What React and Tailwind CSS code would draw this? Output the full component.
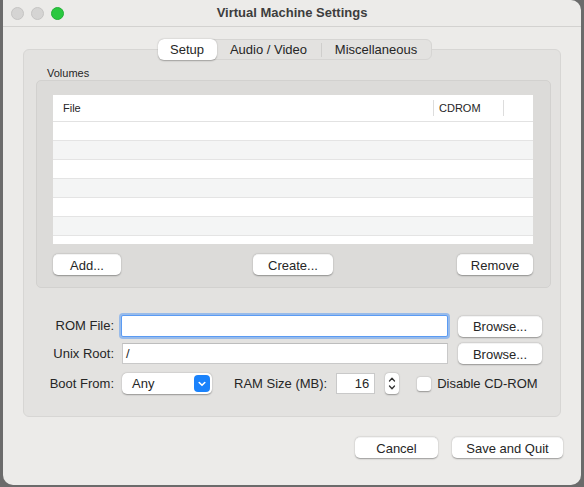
import React from "react";

const Btn = ({ children, className = "" }) => (
  <button
    className={`h-[21px] bg-white rounded-[5px] text-[13px] text-[#262626] shadow-[0_0.5px_1.5px_rgba(0,0,0,0.35)] border-t border-t-[#f3f3f3] leading-none ${className}`}
  >
    {children}
  </button>
);

const Dot = ({ color }) => (
  <span className={`w-[13px] h-[13px] rounded-full ${color}`} />
);

const App = () => {
  const rows = [0, 1, 2, 3, 4, 5, 6];

  return (
    <div
      className="w-[584px] h-[487px] bg-[#6b6b6b] pl-[3px] pr-[3px] pb-[2px] flex"
      style={{ fontFamily: '"Liberation Sans", Arial, sans-serif' }}
    >
      <div className="flex-1 bg-[#ecebe9] rounded-[10px] rounded-tl-none flex flex-col overflow-hidden">
        {/* title bar */}
        <div className="h-[27px] border-b border-[#d3d2d0] flex items-center relative shrink-0">
          <div className="flex gap-[7px] pl-[8px]">
            <Dot color="bg-[#d5d4d3] border border-[#c5c4c3]" />
            <Dot color="bg-[#d5d4d3] border border-[#c5c4c3]" />
            <Dot color="bg-[#2ac840] border border-[#22b036]" />
          </div>
          <div className="absolute inset-0 flex items-center justify-center text-[13px] font-bold text-[#3d3d3d]">
            Virtual Machine Settings
          </div>
        </div>

        {/* tab group */}
        <div className="pt-[12px] px-[20px] flex flex-col">
          <div className="flex justify-center relative z-10 -mb-[11px] pl-[5px]">
            <div className="flex items-center h-[21px] bg-[#e3e2e0] rounded-[6px] border border-[#d6d5d3] text-[13px] text-[#262626]">
              <div className="h-[21px] -my-px -ml-px w-[59px] bg-white rounded-[6px] shadow-[0_0.5px_1.5px_rgba(0,0,0,0.3)] flex items-center justify-center">
                Setup
              </div>
              <div className="w-[104px] text-center">Audio / Video</div>
              <div className="w-px h-[14px] bg-[#cfcecc]" />
              <div className="w-[109px] text-center">Miscellaneous</div>
            </div>
          </div>
          <div className="h-[368px] bg-[#e3e2e0] border border-[#d7d6d4] rounded-[6px] flex flex-col pl-[12px] pr-[9px] pt-[16px]">
            <div className="text-[11px] text-[#262626] pl-[11px] h-[14px] leading-[14px]">Volumes</div>
            <div className="h-[208px] bg-[#dcdbd9] border border-[#d2d1cf] rounded-[5px] pl-[16px] pr-[17px] pt-[14px] flex flex-col">
              <div className="h-[149px] bg-white flex flex-col overflow-hidden">
                <div className="h-[27px] flex items-center text-[11px] text-[#262626] border-b border-[#e2e2e2] shrink-0">
                  <div className="flex-1 pl-[10px]">File</div>
                  <div className="w-px h-[16px] bg-[#dddddd]" />
                  <div className="w-[69px] pl-[5px]">CDROM</div>
                  <div className="w-px h-[16px] bg-[#dddddd]" />
                  <div className="w-[29px]" />
                </div>
                {rows.map((r) => (
                  <div
                    key={r}
                    className={`h-[19px] shrink-0 border-b border-[#e4e4e4] ${r % 2 === 1 ? "bg-[#f4f5f5]" : "bg-white"}`}
                  />
                ))}
              </div>
              <div className="flex items-center mt-[10px]">
                <div className="flex-1 flex">
                  <Btn className="w-[68px]">Add...</Btn>
                </div>
                <Btn className="w-[80px]">Create...</Btn>
                <div className="flex-1 flex justify-end">
                  <Btn className="w-[76px]">Remove</Btn>
                </div>
              </div>
            </div>

            {/* form */}
            <div className="mt-[27px] flex flex-col text-[13px] text-[#262626]">
              <div className="flex items-center h-[22px]">
                <div className="w-[85px] text-right pr-[7px]">ROM File:</div>
                <div className="w-[327px] h-[22px] bg-white border border-[#5b9bf3] shadow-[0_0_0_2px_rgba(91,155,243,0.55)] rounded-[2px]" />
                <Btn className="w-[84px] ml-[10px]">Browse...</Btn>
              </div>
              <div className="flex items-center h-[21px] mt-[6px]">
                <div className="w-[85px] text-right pr-[7px]">Unix Root:</div>
                <div className="w-[326px] h-[21px] bg-white border border-[#c9c9c9] border-t-[#bdbdbd] ml-[1px] flex items-center pl-[3px]">
                  /
                </div>
                <Btn className="w-[84px] ml-[10px]">Browse...</Btn>
              </div>
              <div className="flex items-center h-[21px] mt-[9px]">
                <div className="w-[85px] text-right pr-[7px]">Boot From:</div>
                <div className="ml-[1px] w-[90px] h-[21px] bg-white rounded-[5px] shadow-[0_0.5px_1.5px_rgba(0,0,0,0.35)] flex items-center justify-between pl-[10px] pr-[2px]">
                  <span>Any</span>
                  <span className="w-[16px] h-[17px] rounded-[4px] bg-[#1a82fb] flex items-center justify-center">
                    <svg width="8" height="6" viewBox="0 0 8 6">
                      <path d="M1.2 1.5 L4 4.3 L6.8 1.5" stroke="white" strokeWidth="1.6" fill="none" strokeLinecap="round" strokeLinejoin="round" />
                    </svg>
                  </span>
                </div>
                <div className="ml-[22px]">RAM Size (MB):</div>
                <div className="ml-[9px] w-[39px] h-[21px] bg-white border border-[#c9c9c9] flex items-center justify-end pr-[5px]">16</div>
                <div className="ml-[10px] w-[14px] h-[21px] bg-white rounded-[4px] shadow-[0_0.5px_1.5px_rgba(0,0,0,0.35)] flex flex-col items-center justify-center gap-[3px]">
                  <svg width="8" height="5" viewBox="0 0 8 5">
                    <path d="M1.5 4 L4 1.3 L6.5 4" stroke="#333" strokeWidth="1.3" fill="none" strokeLinecap="round" strokeLinejoin="round" />
                  </svg>
                  <svg width="8" height="5" viewBox="0 0 8 5">
                    <path d="M1.5 1 L4 3.7 L6.5 1" stroke="#333" strokeWidth="1.3" fill="none" strokeLinecap="round" strokeLinejoin="round" />
                  </svg>
                </div>
                <div className="ml-[18px] w-[14px] h-[14px] bg-white rounded-[3px] shadow-[0_0.5px_1.5px_rgba(0,0,0,0.35)]" />
                <div className="ml-[6px]">Disable CD-ROM</div>
              </div>
            </div>
          </div>
        </div>

        {/* bottom buttons */}
        <div className="flex justify-end gap-[14px] pr-[18px] mt-[20px]">
          <Btn className="w-[83px]">Cancel</Btn>
          <Btn className="w-[111px]">Save and Quit</Btn>
        </div>
      </div>
    </div>
  );
};

export default App;
